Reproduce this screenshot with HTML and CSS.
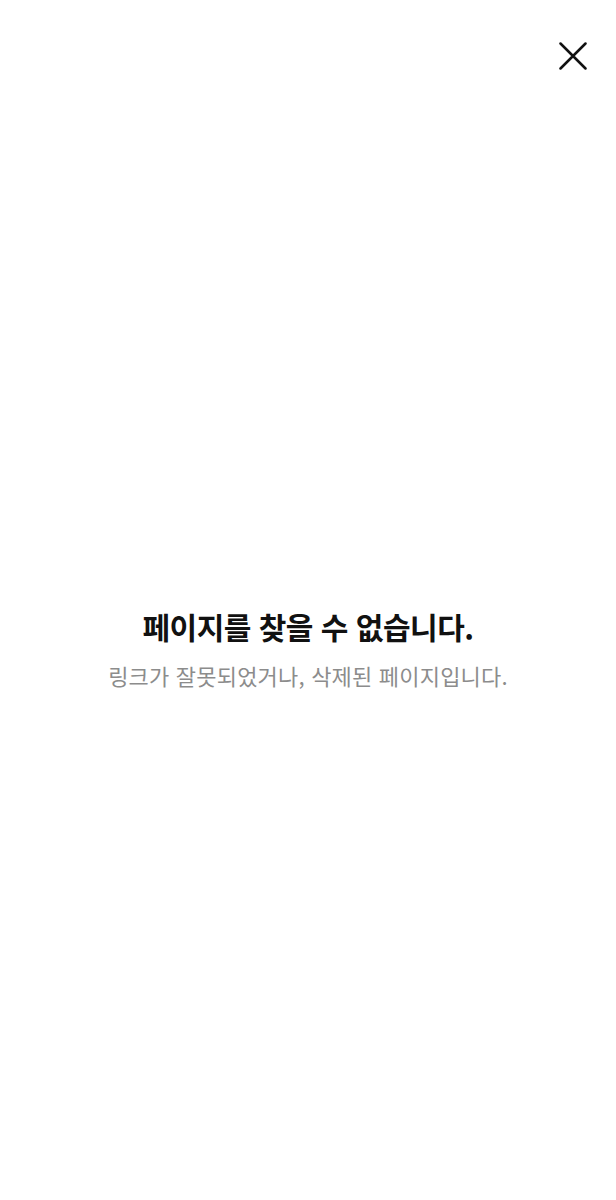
FILE: index.html
```html
<!DOCTYPE html>
<html lang="ko">
<head>
<meta charset="utf-8">
<link rel="stylesheet" href="styles.css">
</head>
<body>
<div class="page">
  <header class="top">
    <button class="close" aria-label="닫기">
      <svg width="28" height="28" viewBox="0 0 28 28"><path d="M1.5 1.5 L26.5 26.5 M26.5 1.5 L1.5 26.5" stroke="#111" stroke-width="2.5" stroke-linecap="round" fill="none"/></svg>
    </button>
  </header>
  <main class="msg">
    <h1 class="title">페이지를 찾을 수 없습니다.</h1>
    <p class="sub">링크가 잘못되었거나, 삭제된 페이지입니다.</p>
  </main>
</div>
</body>
</html>
```
FILE: styles.css
```css
html, body { margin: 0; padding: 0; background: #fff; }
body { font-family: "Noto Sans CJK KR", "Noto Sans", sans-serif; }
.page { width: 616px; height: 1200px; display: flex; flex-direction: column; }
.top { display: flex; justify-content: flex-end; padding: 42px 29px 0 0; }
.close { border: 0; background: none; padding: 0; width: 28px; height: 28px; display: block; }
.close svg { display: block; }
.msg { display: flex; flex-direction: column; align-items: center; padding-top: 536px; }
.title { margin: 0; font-size: 30px; font-weight: 700; color: #111; line-height: 40px; letter-spacing: -0.5px; }
.sub { margin: 14px 0 0; font-size: 22px; font-weight: 400; color: #8c8c8c; line-height: 30px; letter-spacing: 0.2px; }
```
